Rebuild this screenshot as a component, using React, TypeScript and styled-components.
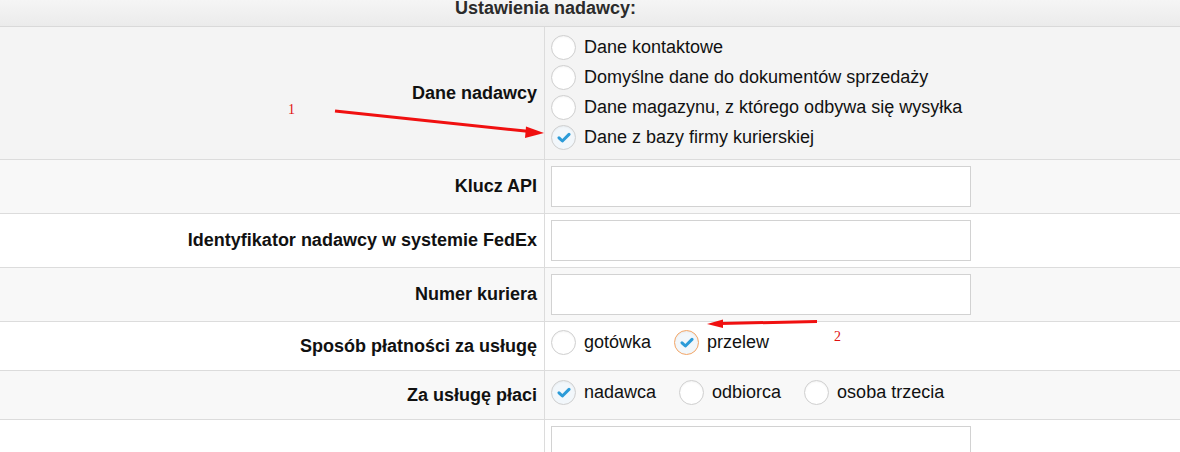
import styled, { createGlobalStyle } from 'styled-components'

const GlobalStyle = createGlobalStyle`
    html, body {
        margin: 0;
        padding: 0;
        background: #fff;
    }
    body {
        font-family: "Liberation Sans", Arial, sans-serif;
        color: #111;
        overflow: hidden;
    }
`

const Page = styled.div`
    position: relative;
    width: 1180px;
    height: 452px;
    overflow: hidden;
`

const Header = styled.div`
    height: 26px;
    border-bottom: 1px solid #d9d9d9;
    background: linear-gradient(#f5f5f5, #ebebeb);
    padding-left: 455px;
    font-size: 18px;
    line-height: 17px;
    font-weight: 700;
    color: #2b2b2b;
`

const Row = styled.div<{ $shade?: string }>`
    display: grid;
    grid-template-columns: 545px 1fr;
    background: ${({ $shade }) => $shade || '#fff'};
    border-bottom: 1px solid #dcdcdc;
`

const Label = styled.div`
    display: flex;
    align-items: center;
    justify-content: flex-end;
    padding: 0 7px;
    border-right: 1px solid #dcdcdc;
    font-size: 18px;
    font-weight: 700;
    color: #111;
`

const Value = styled.div<{ $pad?: string }>`
    padding: ${({ $pad }) => $pad || '6px'};
`

const TextInput = styled.input`
    display: block;
    box-sizing: border-box;
    width: 420px;
    height: 41px;
    margin: 0;
    border: 1px solid #d2d2d2;
    background: #fff;
    outline: none;
`

const OptionList = styled.div<{ $inline?: boolean }>`
    display: flex;
    flex-direction: ${({ $inline }) => ($inline ? 'row' : 'column')};
    gap: ${({ $inline }) => ($inline ? '23px' : '0')};
`

const Option = styled.label`
    display: flex;
    align-items: center;
    height: 30px;
    gap: 8px;
    font-size: 18px;
    color: #111;
    white-space: nowrap;
`

const Circle = styled.span<{ $checked?: boolean; $focus?: boolean }>`
    box-sizing: border-box;
    display: inline-flex;
    align-items: center;
    justify-content: center;
    width: 25px;
    height: 25px;
    border-radius: 50%;
    border: 1px solid ${({ $focus }) => ($focus ? '#f3a566' : '#cfcfcf')};
    background: ${({ $checked }) => ($checked ? '#f2f7fb' : '#fff')};
    box-shadow: inset 0 1px 2px rgba(0, 0, 0, 0.05);
`

const Note = styled.span<{ $x: number; $y: number }>`
    position: absolute;
    left: ${({ $x }) => $x}px;
    top: ${({ $y }) => $y}px;
    font-family: "Liberation Serif", serif;
    font-size: 14px;
    line-height: 14px;
    color: #e01010;
`

const Overlay = styled.svg`
    position: absolute;
    left: 0;
    top: 0;
    pointer-events: none;
`

const Radio = ({ label, checked, focus }: { label: string; checked?: boolean; focus?: boolean }) => (
    <Option>
        <Circle $checked={checked} $focus={focus}>
            {checked && (
                <svg width='14' height='11' viewBox='0 0 14 11'>
                    <path d='M2 5.8 L5.4 9 L12 2.4' fill='none' stroke='#2b9bd8' strokeWidth='3' strokeLinecap='round' strokeLinejoin='round' />
                </svg>
            )}
        </Circle>
        {label}
    </Option>
)

const App = () => {
    return (
        <Page>
            <GlobalStyle />
            <Header>Ustawienia nadawcy:</Header>

            <Row $shade='#f4f4f4'>
                <Label>Dane nadawcy</Label>
                <Value $pad='5px 6px 7px'>
                    <OptionList>
                        <Radio label='Dane kontaktowe' />
                        <Radio label='Domyślne dane do dokumentów sprzedaży' />
                        <Radio label='Dane magazynu, z którego odbywa się wysyłka' />
                        <Radio label='Dane z bazy firmy kurierskiej' checked />
                    </OptionList>
                </Value>
            </Row>

            <Row $shade='#f8f8f8'>
                <Label>Klucz API</Label>
                <Value>
                    <TextInput />
                </Value>
            </Row>

            <Row>
                <Label>Identyfikator nadawcy w systemie FedEx</Label>
                <Value>
                    <TextInput />
                </Value>
            </Row>

            <Row $shade='#f8f8f8'>
                <Label>Numer kuriera</Label>
                <Value>
                    <TextInput />
                </Value>
            </Row>

            <Row>
                <Label>Sposób płatności za usługę</Label>
                <Value $pad='5px 6px 13px'>
                    <OptionList $inline>
                        <Radio label='gotówka' />
                        <Radio label='przelew' checked focus />
                    </OptionList>
                </Value>
            </Row>

            <Row $shade='#f8f8f8'>
                <Label>Za usługę płaci</Label>
                <Value $pad='6px 6px 12px'>
                    <OptionList $inline>
                        <Radio label='nadawca' checked />
                        <Radio label='odbiorca' />
                        <Radio label='osoba trzecia' />
                    </OptionList>
                </Value>
            </Row>

            <Row>
                <Label />
                <Value>
                    <TextInput />
                </Value>
            </Row>

            <Note $x={288} $y={103}>1</Note>
            <Note $x={834} $y={330}>2</Note>

            <Overlay width='1180' height='452' viewBox='0 0 1180 452'>
                <line x1='335' y1='111' x2='530' y2='131.5' stroke='#f01010' strokeWidth='3' />
                <polygon points='544,133 526,126.5 525,138' fill='#f01010' />
                <line x1='817' y1='321.5' x2='720' y2='323.5' stroke='#f01010' strokeWidth='3' />
                <polygon points='707,324 723,319.5 723,328' fill='#f01010' />
            </Overlay>
        </Page>
    )
}

export default App
